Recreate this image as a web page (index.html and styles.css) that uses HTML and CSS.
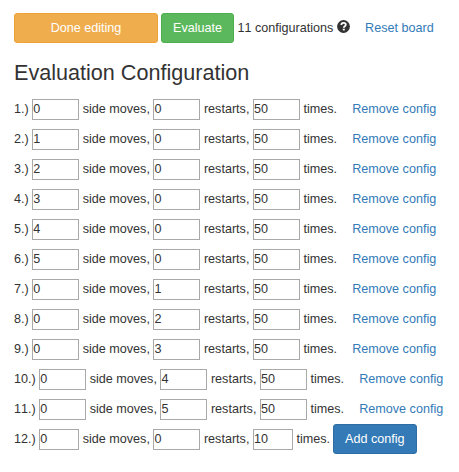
FILE: index.html
```
<!DOCTYPE html>
<html lang="en">
<head>
<meta charset="utf-8">
<title>Evaluation Configuration</title>
<link rel="stylesheet" href="styles.css">
</head>
<body>
<div class="row toolbar">
  <button class="btn btn-warning">Done editing</button>
  <button class="btn btn-success">Evaluate</button>
  <span class="count">11 configurations</span>
  <svg class="help" viewBox="0 0 13 13" aria-hidden="true"><circle cx="6.5" cy="6.5" r="6.4" fill="#333"/><path d="M4.3 5.1C4.3 3.6 5.2 2.9 6.6 2.9S8.8 3.7 8.8 4.8C8.8 6.2 6.8 6.2 6.8 7.8" fill="none" stroke="#fff" stroke-width="1.8"/><path d="M5.8 8.7h2v1.7h-2z" fill="#fff"/></svg>
  <a class="link">Reset board</a>
</div>
<h3>Evaluation Configuration</h3>
<div id="configs"></div>
<script src="app.js"></script>
</body>
</html>
```
FILE: styles.css
```
* { box-sizing: border-box; }
body {
  margin: 0;
  padding: 13px 0 0 14px;
  background: #fff;
  color: #333;
  font: 12.6px/18px "Liberation Sans", Arial, sans-serif;
  font-kerning: none;
}
.row {
  display: flex;
  align-items: center;
  gap: 3.5px;
  height: 30px;
  white-space: nowrap;
}
.row > * { flex: none; }
.btn {
  height: 30px;
  padding: 0 11px;
  border: 1px solid;
  border-radius: 3px;
  color: #fff;
  font: inherit;
  font-kerning: none;
}
.btn-warning { width: 144px; background: #f0ad4e; border-color: #eea236; }
.btn-success { width: 73px; margin-left: -0.5px; background: #5cb85c; border-color: #4cae4c; }
.btn-primary { width: 84px; margin-left: -0.7px; background: #337ab7; border-color: #2e6da4; }
.help { width: 13px; height: 13px; margin-top: -4px; }
.link { padding: 0 11.7px; color: #337ab7; }
h3 {
  margin: 18px 0 9px;
  font-size: 21.6px;
  line-height: 24px;
  font-weight: 500;
}
.field {
  width: 47px;
  height: 21px;
  padding: 0 0 1px;
  border: 1px solid #a9a9a9;
  border-radius: 0;
  background: #fff;
  color: #333;
  font: inherit;
  outline: 0;
}
.field-short { width: 40px; }
```
FILE: app.js
```
const configs = [
  [0, 0, 50], [1, 0, 50], [2, 0, 50], [3, 0, 50], [4, 0, 50], [5, 0, 50],
  [0, 1, 50], [0, 2, 50], [0, 3, 50], [0, 4, 50], [0, 5, 50], [0, 0, 10]
];
document.getElementById('configs').innerHTML = configs.map(([moves, restarts, times], i) => {
  const last = i === configs.length - 1;
  const short = last ? ' field-short' : '';
  return `<div class="row"><span>${i + 1}.)</span>
    <input class="field${short}" value="${moves}"><span>side moves,</span>
    <input class="field" value="${restarts}"><span>restarts,</span>
    <input class="field${short}" value="${times}"><span>times.</span>
    ${last ? '<button class="btn btn-primary">Add config</button>' : '<a class="link">Remove config</a>'}</div>`;
}).join('');
```
